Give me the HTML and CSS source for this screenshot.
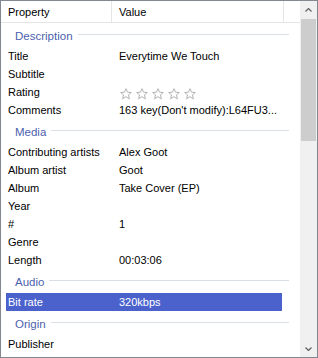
FILE: index.html
```html
<!DOCTYPE html>
<html>
<head>
<meta charset="utf-8">
<link rel="stylesheet" href="styles.css">
</head>
<body>
<div class="panel">
  <div class="main">
    <div class="header">
      <div class="hcell prop">Property</div>
      <div class="hcell val">Value</div>
      <div class="hcell rest"></div>
    </div>
    <div class="list">
      <div class="group"><span class="gname">Description</span><span class="rule"></span></div>
      <div class="row"><span class="k">Title</span><span class="v">Everytime We Touch</span></div>
      <div class="row"><span class="k">Subtitle</span><span class="v"></span></div>
      <div class="row"><span class="k">Rating</span><span class="v stars">
        <svg class="star" viewBox="0 0 12 12"><path d="M6 0.7 L7.6 4.2 L11.3 4.5 L8.4 6.9 L9.4 10.8 L6 8.7 L2.6 10.8 L3.6 6.9 L0.7 4.5 L4.4 4.2 Z"/></svg>
        <svg class="star" viewBox="0 0 12 12"><path d="M6 0.7 L7.6 4.2 L11.3 4.5 L8.4 6.9 L9.4 10.8 L6 8.7 L2.6 10.8 L3.6 6.9 L0.7 4.5 L4.4 4.2 Z"/></svg>
        <svg class="star" viewBox="0 0 12 12"><path d="M6 0.7 L7.6 4.2 L11.3 4.5 L8.4 6.9 L9.4 10.8 L6 8.7 L2.6 10.8 L3.6 6.9 L0.7 4.5 L4.4 4.2 Z"/></svg>
        <svg class="star" viewBox="0 0 12 12"><path d="M6 0.7 L7.6 4.2 L11.3 4.5 L8.4 6.9 L9.4 10.8 L6 8.7 L2.6 10.8 L3.6 6.9 L0.7 4.5 L4.4 4.2 Z"/></svg>
        <svg class="star" viewBox="0 0 12 12"><path d="M6 0.7 L7.6 4.2 L11.3 4.5 L8.4 6.9 L9.4 10.8 L6 8.7 L2.6 10.8 L3.6 6.9 L0.7 4.5 L4.4 4.2 Z"/></svg>
      </span></div>
      <div class="row"><span class="k">Comments</span><span class="v">163 key(Don't modify):L64FU3...</span></div>
      <div class="group"><span class="gname">Media</span><span class="rule"></span></div>
      <div class="row"><span class="k">Contributing artists</span><span class="v">Alex Goot</span></div>
      <div class="row"><span class="k">Album artist</span><span class="v">Goot</span></div>
      <div class="row"><span class="k">Album</span><span class="v">Take Cover (EP)</span></div>
      <div class="row"><span class="k">Year</span><span class="v"></span></div>
      <div class="row"><span class="k">#</span><span class="v">1</span></div>
      <div class="row"><span class="k">Genre</span><span class="v"></span></div>
      <div class="row"><span class="k">Length</span><span class="v">00:03:06</span></div>
      <div class="group"><span class="gname">Audio</span><span class="rule"></span></div>
      <div class="row selected"><span class="k">Bit rate</span><span class="v">320kbps</span></div>
      <div class="group"><span class="gname">Origin</span><span class="rule"></span></div>
      <div class="row"><span class="k">Publisher</span><span class="v"></span></div>
    </div>
  </div>
  <div class="scrollbar">
    <div class="sbtn"><svg viewBox="0 0 7 4" class="chev"><path d="M0.5 3.5 L3.5 0.5 L6.5 3.5"/></svg></div>
    <div class="track"><div class="thumb"></div></div>
    <div class="sbtn"><svg viewBox="0 0 7 4" class="chev"><path d="M0.5 0.5 L3.5 3.5 L6.5 0.5"/></svg></div>
  </div>
</div>
</body>
</html>
```

FILE: styles.css
```css
html, body {
  margin: 0;
  padding: 0;
  background: #ffffff;
}
body {
  font-family: "Liberation Sans", Arial, sans-serif;
  font-size: 11px;
  color: #000;
}
.panel {
  width: 318px;
  height: 358px;
  box-sizing: border-box;
  border: 1px solid #828790;
  display: flex;
  overflow: hidden;
  background: #fff;
}
.main {
  flex: 1;
  display: flex;
  flex-direction: column;
  overflow: hidden;
}
.header {
  height: 22px;
  box-sizing: border-box;
  border-bottom: 1px solid #e5e5e5;
  display: flex;
  flex-shrink: 0;
}
.hcell {
  box-sizing: border-box;
  display: flex;
  align-items: center;
  padding-left: 7px;
  padding-top: 1px;
}
.prop {
  width: 111px;
  border-right: 1px solid #e5e5e5;
}
.val {
  width: 172px;
  border-right: 1px solid #e5e5e5;
}
.rest {
  flex: 1;
}
.list {
  display: flex;
  flex-direction: column;
}
.group {
  height: 24px;
  display: flex;
  align-items: center;
  margin: 0 11px 0 5px;
  padding-left: 9px;
  padding-top: 1px;
  box-sizing: border-box;
}
.gname {
  color: #4c5fae;
  font-size: 11.5px;
}
.rule {
  flex: 1;
  height: 1px;
  background: #d9dee7;
  margin-left: 5px;
  margin-top: -2px;
}
.row {
  height: 18px;
  display: flex;
  align-items: center;
  margin-left: 5px;
  width: 276px;
  white-space: nowrap;
}
.k {
  width: 113px;
  padding-left: 2px;
  box-sizing: border-box;
  flex-shrink: 0;
}
.v {
  flex: 1;
}
.selected {
  background: #4b62cd;
  color: #fff;
}
.stars {
  display: flex;
  gap: 4px;
  padding-left: 1px;
  padding-top: 3px;
}
.star {
  width: 12px;
  height: 12px;
  fill: none;
  stroke: #ababab;
  stroke-width: 0.9;
  stroke-linejoin: round;
}
.scrollbar {
  width: 17px;
  flex-shrink: 0;
  background: #f0f0f0;
  display: flex;
  flex-direction: column;
}
.sbtn {
  height: 17px;
  display: flex;
  align-items: center;
  justify-content: center;
  flex-shrink: 0;
}
.chev {
  width: 7px;
  height: 4px;
  fill: none;
  stroke: #606060;
  stroke-width: 1.2;
}
.track {
  flex: 1;
  padding: 1px 1px 0 1px;
}
.thumb {
  height: 122px;
  background: #cdcdcd;
}
```
